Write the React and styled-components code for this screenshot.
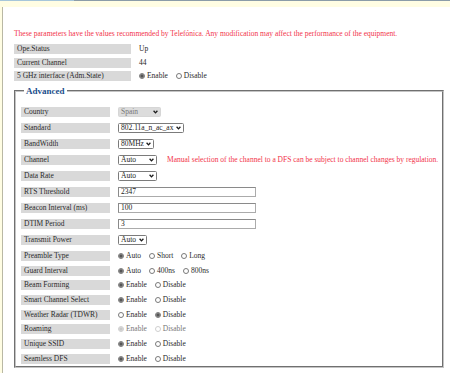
import React from "react";
import styled, { createGlobalStyle } from "styled-components";

const Global = createGlobalStyle`
  html, body { margin: 0; padding: 0; background: #fffde3; }
  body { font-family: "Liberation Serif", "Times New Roman", serif; }
`;

const Page = styled.div`
  width: 450px;
  height: 373px;
  overflow: hidden;
  background: #fffde3;
  display: flex;
  flex-direction: column;
`;

const TopLine = styled.div`
  height: 1px;
  flex: none;
  background: linear-gradient(to right, #a6c6da 0 74px, #8b9ca8 74px);
`;

const YellowBand = styled.div`
  height: 6px;
  flex: none;
`;

const Frame = styled.div`
  flex: 1;
  margin-left: 2px;
  border-left: 1px solid #b9b8a4;
  background: #fff;
  padding-left: 11px;
  font-size: 7.5px;
  color: #262626;
`;

const Notice = styled.div`
  margin-top: 22px;
  height: 10px;
  line-height: 10px;
  color: #f2334a;
  white-space: nowrap;
`;

const StatusTable = styled.div`
  margin-top: 5px;
  display: flex;
  flex-direction: column;
`;

const Row = styled.div`
  display: flex;
  align-items: flex-start;
  height: ${(p) => p.$h}px;
`;

const Label = styled.div`
  flex: none;
  width: ${(p) => p.$w}px;
  height: 10px;
  line-height: 10px;
  background: #d9d9d9;
  padding-left: 3px;
  box-sizing: border-box;
  white-space: nowrap;
  color: #2a2a2a;
`;

const Value = styled.div`
  margin-left: 8px;
  height: 10px;
  display: flex;
  align-items: center;
  white-space: nowrap;
  line-height: 10px;
`;

const Fieldset = styled.fieldset`
  margin: 5px 0 0 0;
  width: 430px;
  height: 282px;
  box-sizing: border-box;
  border: 2px groove #c4c4c4;
  padding: 11px 0 0 5px;
  min-width: 0;
`;

const Legend = styled.legend`
  margin-left: 3px;
  padding: 0 2px;
  font-size: 9px;
  line-height: 10px;
  font-weight: bold;
  color: #1c4f8c;
`;

const SelectBox = styled.div`
  width: ${(p) => p.$w}px;
  height: 10px;
  box-sizing: border-box;
  border: 1px solid ${(p) => (p.$disabled ? "#d6d6d6" : "#7b7b7b")};
  border-radius: 1.5px;
  background: ${(p) => (p.$disabled ? "#dcdcdc" : "#fff")};
  color: ${(p) => (p.$disabled ? "#777" : "#222")};
  display: flex;
  align-items: center;
  justify-content: space-between;
  padding: 0 2px 0 2px;
  line-height: 8px;
`;

const Chevron = () => (
  <svg width="5" height="4" viewBox="0 0 5 4">
    <path d="M0.6 0.8 L2.5 2.9 L4.4 0.8" fill="none" stroke="#1a1a1a" strokeWidth="1.3" />
  </svg>
);

const TextInput = styled.div`
  width: 138px;
  height: 10px;
  box-sizing: border-box;
  border: 1px solid #ababab;
  border-top-color: #8a8a8a;
  border-left-color: #8a8a8a;
  background: #fff;
  padding-left: 2px;
  line-height: 8px;
  color: #222;
`;

const RadioGroup = styled.div`
  display: flex;
  align-items: center;
  color: ${(p) => (p.$disabled ? "#777" : "#2a2a2a")};
`;

const RadioItem = styled.label`
  display: flex;
  align-items: center;
  margin-right: 8px;
`;

const RadioDot = styled.span`
  width: 6px;
  height: 6px;
  box-sizing: border-box;
  border-radius: 50%;
  border: 1px solid ${(p) => (p.$disabled ? "#cfcfcf" : "#7a7a7a")};
  background: ${(p) =>
    p.$checked
      ? p.$disabled
        ? "radial-gradient(circle, #c8c8c8 0 1.4px, #e2e2e2 1.8px)"
        : "radial-gradient(circle, #555 0 1.4px, #a9a9a9 1.8px)"
      : "#fff"};
  margin-right: 2px;
  flex: none;
`;

const Hint = styled.span`
  margin-left: 10px;
  color: #f2334a;
`;

const Radios = ({ options, checked, disabled }) => (
  <RadioGroup $disabled={disabled}>
    {options.map((o, i) => (
      <RadioItem key={o}>
        <RadioDot $checked={i === checked} $disabled={disabled} />
        {o}
      </RadioItem>
    ))}
  </RadioGroup>
);

const Select = ({ w, children, disabled }) => (
  <SelectBox $w={w} $disabled={disabled}>
    <span>{children}</span>
    <Chevron />
  </SelectBox>
);

const ED = ["Enable", "Disable"];

export default function App() {
  return (
    <Page>
      <Global />
      <TopLine />
      <YellowBand />
      <Frame>
        <Notice>
          These parameters have the values recommended by Telefónica. Any modification may affect the performance of the equipment.
        </Notice>
        <StatusTable>
          <Row $h={13.5}>
            <Label $w={117}>Ope.Status</Label>
            <Value>Up</Value>
          </Row>
          <Row $h={13.5}>
            <Label $w={117}>Current Channel</Label>
            <Value>44</Value>
          </Row>
          <Row $h={10}>
            <Label $w={117}>5 GHz interface (Adm.State)</Label>
            <Value>
              <Radios options={ED} checked={0} />
            </Value>
          </Row>
        </StatusTable>
        <Fieldset>
          <Legend>Advanced</Legend>
          <Row $h={16}>
            <Label $w={89}>Country</Label>
            <Value>
              <Select w={43} disabled>Spain</Select>
            </Value>
          </Row>
          <Row $h={16}>
            <Label $w={89}>Standard</Label>
            <Value>
              <Select w={66}>802.11a_n_ac_ax</Select>
            </Value>
          </Row>
          <Row $h={16}>
            <Label $w={89}>BandWidth</Label>
            <Value>
              <Select w={36}>80MHz</Select>
            </Value>
          </Row>
          <Row $h={16}>
            <Label $w={89}>Channel</Label>
            <Value>
              <Select w={39}>Auto</Select>
              <Hint>Manual selection of the channel to a DFS can be subject to channel changes by regulation.</Hint>
            </Value>
          </Row>
          <Row $h={16}>
            <Label $w={89}>Data Rate</Label>
            <Value>
              <Select w={39}>Auto</Select>
            </Value>
          </Row>
          <Row $h={15.5}>
            <Label $w={89}>RTS Threshold</Label>
            <Value>
              <TextInput>2347</TextInput>
            </Value>
          </Row>
          <Row $h={16}>
            <Label $w={89}>Beacon Interval (ms)</Label>
            <Value>
              <TextInput>100</TextInput>
            </Value>
          </Row>
          <Row $h={16}>
            <Label $w={89}>DTIM Period</Label>
            <Value>
              <TextInput>3</TextInput>
            </Value>
          </Row>
          <Row $h={16}>
            <Label $w={89}>Transmit Power</Label>
            <Value>
              <Select w={29}>Auto</Select>
            </Value>
          </Row>
          <Row $h={15}>
            <Label $w={89}>Preamble Type</Label>
            <Value>
              <Radios options={["Auto", "Short", "Long"]} checked={0} />
            </Value>
          </Row>
          <Row $h={14.5}>
            <Label $w={89}>Guard Interval</Label>
            <Value>
              <Radios options={["Auto", "400ns", "800ns"]} checked={0} />
            </Value>
          </Row>
          <Row $h={14.8}>
            <Label $w={89}>Beam Forming</Label>
            <Value>
              <Radios options={ED} checked={0} />
            </Value>
          </Row>
          <Row $h={14.8}>
            <Label $w={89}>Smart Channel Select</Label>
            <Value>
              <Radios options={ED} checked={0} />
            </Value>
          </Row>
          <Row $h={14.8}>
            <Label $w={89}>Weather Radar (TDWR)</Label>
            <Value>
              <Radios options={ED} checked={1} />
            </Value>
          </Row>
          <Row $h={14.5}>
            <Label $w={89}>Roaming</Label>
            <Value>
              <Radios options={ED} checked={0} disabled />
            </Value>
          </Row>
          <Row $h={14.8}>
            <Label $w={89}>Unique SSID</Label>
            <Value>
              <Radios options={ED} checked={0} />
            </Value>
          </Row>
          <Row $h={14.8}>
            <Label $w={89}>Seamless DFS</Label>
            <Value>
              <Radios options={ED} checked={0} />
            </Value>
          </Row>
        </Fieldset>
      </Frame>
    </Page>
  );
}
